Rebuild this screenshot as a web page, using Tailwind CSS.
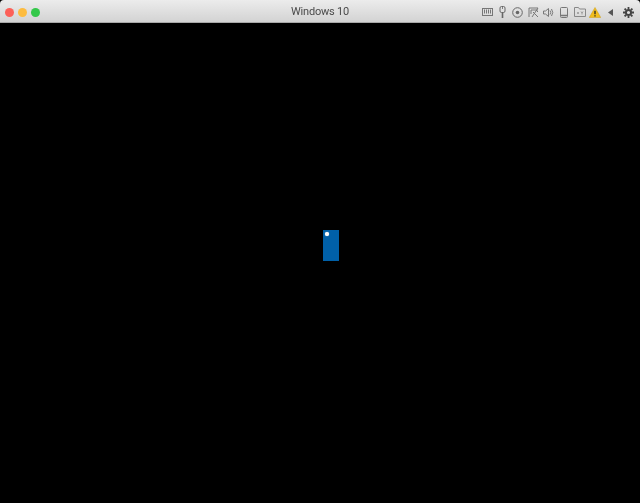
<!DOCTYPE html>
<html lang="en">
<head>
    <meta charset="UTF-8">
    <title>Windows 10</title>
    <script src="https://cdn.jsdelivr.net/npm/@tailwindcss/browser@4"></script>
</head>
<body class="bg-black h-[503px] w-[640px] overflow-hidden flex flex-col">

    <!-- title bar -->
    <div class="relative h-[23px] shrink-0 flex items-center pt-[2px] bg-gradient-to-b from-[#ececec] to-[#d3d3d3] border-b border-[#a8a8a8] rounded-t-[4px]">
        <div class="flex gap-[4px] ml-[5px]">
            <div class="w-[9px] h-[9px] rounded-full bg-[#fc6058]"></div>
            <div class="w-[9px] h-[9px] rounded-full bg-[#fdbc40]"></div>
            <div class="w-[9px] h-[9px] rounded-full bg-[#34c84a]"></div>
        </div>
        <div class="absolute inset-x-0 top-[4px] text-center text-[11px] tracking-[-0.2px] text-[#4a4a4a] font-['Roboto',sans-serif] blur-[0.25px]">Windows 10</div>

        <!-- toolbar icons -->
        <div class="ml-auto mr-[2px] flex items-center blur-[0.3px]">
            <!-- keyboard -->
            <div class="w-[15.4px] flex justify-center"><svg class="w-[11px] h-[8px]" viewBox="0 0 11 8" fill="#777"><rect x="0.500" y="0.500" width="10" height="7" fill="none" stroke="#777"/><path d="M2 1.500h1v4H2zM4 1.500h1v4H4zM6 1.500h1v4H6zM8 1.500h1v4H8z"/></svg></div>
            <!-- usb -->
            <div class="w-[15.4px] flex justify-center"><svg class="w-[7px] h-[12px]" viewBox="0 0 7 12" fill="none" stroke="#666"><rect x="1" y="0.500" width="5" height="6" rx="1.500"/><path d="M3.500 1v2" stroke-width="0.800"/><path d="M3.500 6.500V12" stroke-width="1.600"/></svg></div>
            <!-- disc -->
            <div class="w-[15.4px] flex justify-center"><svg class="w-[11px] h-[11px]" viewBox="0 0 11 11" fill="none" stroke="#666"><circle cx="5.500" cy="5.500" r="4.800"/><circle cx="5.500" cy="5.500" r="1.800" fill="#666" stroke="none"/></svg></div>
            <!-- network -->
            <div class="w-[15.4px] flex justify-center"><svg class="w-[11px] h-[11px]" viewBox="0 0 11 11" fill="none" stroke="#777"><path d="M1 1h9M1 1v9M3 3h7M3 3v4M5 5l5 5M10 1L4 10M8 3l2 2"/></svg></div>
            <!-- sound -->
            <div class="w-[15.4px] flex justify-center"><svg class="w-[11px] h-[11px]" viewBox="0 0 11 11" fill="none" stroke="#777"><path d="M0.500 4h2l3-2.500v8L2.500 7h-2z"/><path d="M7 3.500q1.500 2 0 4M8.500 2q2.500 3.500 0 7"/></svg></div>
            <!-- tablet -->
            <div class="w-[15.4px] flex justify-center"><svg class="w-[8px] h-[11px]" viewBox="0 0 8 11" fill="none" stroke="#777"><rect x="0.500" y="0.500" width="7" height="10" rx="1"/><path d="M1 8.500h6" stroke-width="1.500"/></svg></div>
            <!-- shared folder -->
            <div class="w-[15.4px] flex justify-center"><svg class="w-[12px] h-[10px]" viewBox="0 0 12 10" fill="none" stroke="#888"><path d="M0.500 9.500V0.500h4l1 1.500h6v7.500z"/><path d="M3 6h2M4 5v2M7 4.500l1 1.500 1-1.500M8 6v1.500" stroke-width="0.800"/></svg></div>
            <!-- warning -->
            <div class="w-[15.4px] flex justify-center"><svg class="w-[12px] h-[11px]" viewBox="0 0 13 12"><path d="M6.500 0.500L12.800 11.500H0.200z" fill="#f2bd1d" stroke="#c99a10" stroke-width="0.500"/><path d="M5.800 4h1.400v4H5.800zM5.800 9h1.400v1.300H5.800z" fill="#222"/></svg></div>
            <!-- arrow -->
            <div class="w-[15.4px] flex justify-center"><svg class="w-[5px] h-[7px]" viewBox="0 0 5 7" fill="#555"><path d="M5 0v7L0 3.500z"/></svg></div>
            <!-- gear -->
            <div class="w-[20px] flex justify-center"><svg class="w-[11px] h-[11px]" viewBox="0 0 11 11" fill="none" stroke="#444"><circle cx="5.500" cy="5.500" r="2.600" stroke-width="2"/><path d="M5.500 0v2M5.500 9v2M0 5.500h2M9 5.500h2M1.600 1.600L3 3M8 8l1.400 1.400M9.400 1.600L8 3M3 8L1.600 9.400" stroke-width="1.800"/></svg></div>
        </div>
    </div>

    <!-- vm screen -->
    <div class="flex-1 pl-[323px] pt-[207px]">
        <div class="relative w-[16px] h-[31px] bg-[#0060a8]">
            <div class="absolute left-[2px] top-[2px] w-[4px] h-[4px] rounded-full bg-white shadow-[0_0_1px_white]"></div>
        </div>
    </div>

</body>
</html>
